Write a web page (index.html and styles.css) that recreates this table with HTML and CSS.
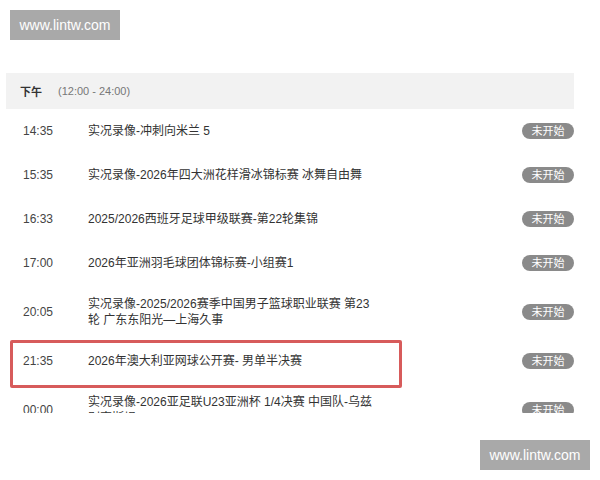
FILE: index.html
```html
<!DOCTYPE html>
<html>
<head>
    <title>赛事节目单</title>
    <meta name="viewport" content="width=device-width, initial-scale=1">
    <link rel="stylesheet" href="styles.css">
</head>
<body>
    <div class="watermark watermark-top">www.lintw.com</div>

    <div class="panel">
        <div class="period">
            <span class="period-name">下午</span>
            <span class="period-range">(12:00 - 24:00)</span>
        </div>

        <div class="row">
            <div class="time">14:35</div>
            <div class="title">实况录像-冲刺向米兰 5</div>
            <div class="status">未开始</div>
        </div>
        <div class="row">
            <div class="time">15:35</div>
            <div class="title">实况录像-2026年四大洲花样滑冰锦标赛 冰舞自由舞</div>
            <div class="status">未开始</div>
        </div>
        <div class="row">
            <div class="time">16:33</div>
            <div class="title">2025/2026西班牙足球甲级联赛-第22轮集锦</div>
            <div class="status">未开始</div>
        </div>
        <div class="row">
            <div class="time">17:00</div>
            <div class="title">2026年亚洲羽毛球团体锦标赛-小组赛1</div>
            <div class="status">未开始</div>
        </div>
        <div class="row">
            <div class="time">20:05</div>
            <div class="title">实况录像-2025/2026赛季中国男子篮球职业联赛 第23轮 广东东阳光—上海久事</div>
            <div class="status">未开始</div>
        </div>
        <div class="row highlighted">
            <div class="time">21:35</div>
            <div class="title">2026年澳大利亚网球公开赛- 男单半决赛</div>
            <div class="status">未开始</div>
            <div class="mark"></div>
        </div>
        <div class="row">
            <div class="time">00:00</div>
            <div class="title">实况录像-2026亚足联U23亚洲杯 1/4决赛 中国队-乌兹别克斯坦</div>
            <div class="status">未开始</div>
        </div>
    </div>

    <div class="watermark watermark-bottom">www.lintw.com</div>
</body>
</html>
```

FILE: styles.css
```css
body {
    margin: 0;
    background-color: #ffffff;
    font-family: 'Liberation Sans', 'Noto Sans CJK SC', sans-serif;
    color: #333;
    width: 600px;
    height: 480px;
    position: relative;
    overflow: hidden;
}
.watermark {
    position: absolute;
    width: 110px;
    height: 30px;
    line-height: 30px;
    background-color: #a9a9a9;
    color: #ffffff;
    font-size: 14px;
    text-align: center;
}
.watermark-top {
    left: 10px;
    top: 10px;
}
.watermark-bottom {
    left: 480px;
    top: 440px;
}
.panel {
    margin: 73px 0 0 6px;
    width: 568px;
    height: 340px;
    overflow: hidden;
}
.period {
    height: 36px;
    display: flex;
    align-items: center;
    padding-left: 14px;
    background-color: #f2f2f2;
    font-size: 11px;
}
.period-name {
    font-weight: bold;
    color: #333;
    width: 38px;
}
.period-range {
    color: #777;
}
.row {
    position: relative;
    display: flex;
    align-items: center;
    min-height: 44px;
    box-sizing: border-box;
    padding: 11px 0 11px 17px;
    font-size: 12px;
    line-height: 16px;
}
.time {
    width: 65px;
    flex-shrink: 0;
    color: #444;
}
.title {
    width: 290px;
    flex-shrink: 0;
}
.status {
    margin-left: auto;
    width: 52px;
    height: 16px;
    line-height: 16px;
    border-radius: 8px;
    background-color: #8a8a8a;
    color: #ffffff;
    font-size: 11px;
    text-align: center;
}
.mark {
    position: absolute;
    left: 4px;
    top: 1px;
    width: 392px;
    height: 48px;
    box-sizing: border-box;
    border: 3px solid #d75b5b;
    border-radius: 2px;
}
```
